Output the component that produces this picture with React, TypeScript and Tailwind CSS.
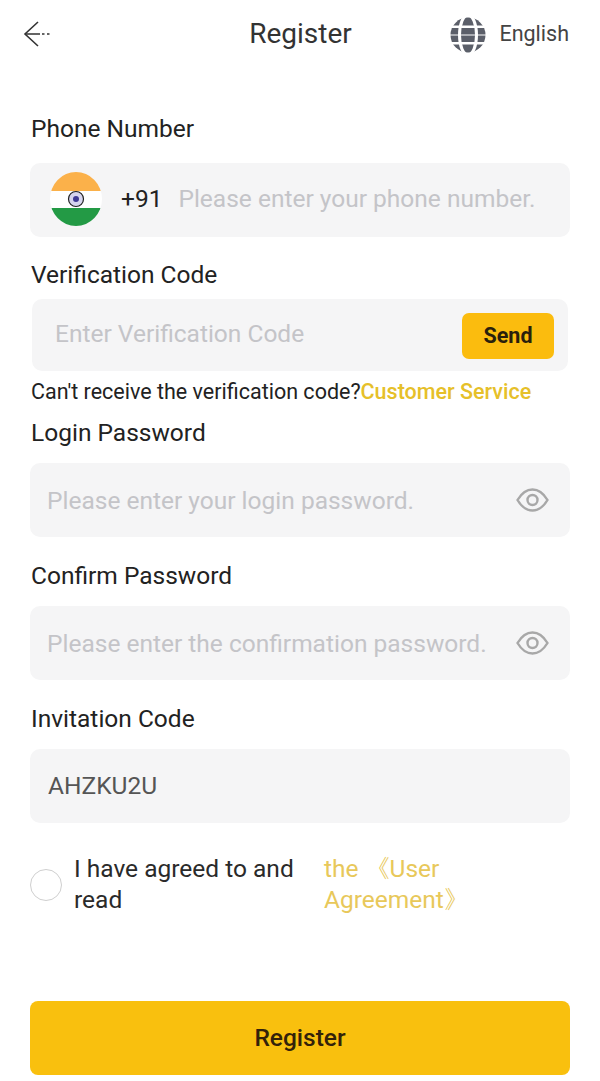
import { useState } from "react";

function BackArrow() {
  return (
    <svg width="28" height="30" viewBox="0 0 28 30" fill="none" stroke="#333" strokeWidth="1.6">
      <path d="M15 3 L2 15 L15 27" />
      <path d="M2 15 H17 M19 15 H21.5 M24 15 H26.5" />
    </svg>
  );
}

function Globe() {
  return (
    <svg width="36" height="36" viewBox="0 0 36 36" className="mt-px">
      <circle cx="18" cy="18" r="17.5" fill="#5b5f69" />
      <g stroke="#fff" fill="none">
        <path d="M-1 9.75 H37 M-1 26.25 H37" strokeWidth="2.6" />
        <path d="M-1 18 H37" strokeWidth="1" />
        <ellipse cx="18" cy="18" rx="8.5" ry="20" strokeWidth="3" />
      </g>
    </svg>
  );
}

function IndiaFlag() {
  return (
    <svg width="52" height="54" viewBox="0 0 52 54" className="mb-[2px] shrink-0">
      <defs>
        <clipPath id="flag-clip">
          <ellipse cx="26" cy="27" rx="26" ry="27" />
        </clipPath>
      </defs>
      <g clipPath="url(#flag-clip)">
        <rect width="52" height="19" fill="#fbb14a" />
        <rect y="19" width="52" height="17" fill="#ffffff" />
        <rect y="36" width="52" height="18" fill="#239a45" />
      </g>
      <circle cx="26" cy="27" r="7.5" fill="#d6d4ee" stroke="#222" strokeWidth="1.2" />
      <circle cx="26" cy="27" r="3" fill="#3f3a94" />
    </svg>
  );
}

function Eye() {
  return (
    <svg width="33" height="24" viewBox="0 0 33 24" fill="none" stroke="#a8a8a8" strokeWidth="2.4" className="shrink-0">
      <path d="M1.5 12 C6 4.5 11 1.5 16.5 1.5 C22 1.5 27 4.5 31.5 12 C27 19.5 22 22.5 16.5 22.5 C11 22.5 6 19.5 1.5 12 Z" />
      <circle cx="16.5" cy="12" r="5" />
    </svg>
  );
}

const inputClass =
  "min-w-0 flex-1 bg-transparent text-[24.5px] text-[#555] outline-none placeholder:text-[#c4c4c8]";
const labelClass = "pl-px text-[24.5px] leading-[34px]";

export default function App() {
  const [agreed, setAgreed] = useState(false);

  return (
    <div className="flex min-h-[1081px] w-[600px] flex-col bg-white font-['Roboto',sans-serif] text-[#222]">
      {/* Header */}
      <div className="grid h-[68px] grid-cols-[1fr_auto_1fr] items-center pl-[23px] pr-[31px]">
        <BackArrow />
        <h1 className="ml-[9px] text-[28px] text-[#333]">Register</h1>
        <div className="flex items-center justify-end gap-[13px]">
          <Globe />
          <span className="text-[21.5px] text-[#444]">English</span>
        </div>
      </div>

      <div className="flex flex-1 flex-col px-[30px]">
        <label className={`mt-[44px] ${labelClass}`}>Phone Number</label>
        <div className="mt-[17px] flex h-[74px] items-center rounded-[10px] bg-[#f5f5f6] pl-[20px]">
          <IndiaFlag />
          <span className="ml-[19px] mr-[16px] pb-[2px] text-[24.5px]">+91</span>
          <input className={`pb-[2px] ${inputClass}`} placeholder="Please enter your phone number." />
        </div>

        <label className={`mt-[21px] ${labelClass}`}>Verification Code</label>
        <div className="mx-[2px] mt-[7px] flex h-[72px] items-center rounded-[10px] bg-[#f5f5f6] pl-[23px] pr-[14px]">
          <input className={`pb-[2px] ${inputClass}`} placeholder="Enter Verification Code" />
          <button className="mt-[2px] h-[46px] w-[92px] rounded-[7px] bg-[#fbbc0e] text-[21.5px] font-bold text-[#2a1f0c]">
            Send
          </button>
        </div>
        <p className="mt-[7px] pl-px text-[21.5px] leading-[28px]">
          Can't receive the verification code?
          <span className="font-medium text-[#e6c029]">Customer Service</span>
        </p>

        <label className={`mt-[10px] ${labelClass}`}>Login Password</label>
        <div className="mt-[13px] flex h-[74px] items-center rounded-[10px] bg-[#f5f5f6] pl-[17px] pr-[21px]">
          <input className={`pt-[2px] ${inputClass}`} placeholder="Please enter your login password." />
          <Eye />
        </div>

        <label className={`mt-[22px] ${labelClass}`}>Confirm Password</label>
        <div className="mt-[13px] flex h-[74px] items-center rounded-[10px] bg-[#f5f5f6] pl-[17px] pr-[21px]">
          <input className={`pt-[2px] ${inputClass}`} placeholder="Please enter the confirmation password." />
          <Eye />
        </div>

        <label className={`mt-[22px] ${labelClass}`}>Invitation Code</label>
        <div className="mt-[13px] flex h-[74px] items-center rounded-[10px] bg-[#f5f5f6] pl-[18px] pr-[21px]">
          <input className={inputClass} defaultValue="AHZKU2U" />
        </div>

        {/* Agreement */}
        <div className="mt-[30px] flex items-center">
          <button
            onClick={() => setAgreed(!agreed)}
            className={`h-[32px] w-[32px] shrink-0 rounded-full border border-[#cfcfcf] ${agreed ? "bg-[#fbbc0e]" : "bg-white"}`}
          />
          <div className="ml-[12px] w-[250px] pb-[2px] text-[24.5px] leading-[31px] text-[#2a2a2a]">
            I have agreed to and read
          </div>
          <div className="w-[170px] pb-[2px] text-[24.5px] leading-[31px] text-[#e8c85a]">the 《User Agreement》</div>
        </div>

        <button className="mt-[84px] h-[74px] rounded-[8px] bg-[#f9c00e] text-[24.5px] font-medium text-[#33220a]">
          Register
        </button>
      </div>
    </div>
  );
}
